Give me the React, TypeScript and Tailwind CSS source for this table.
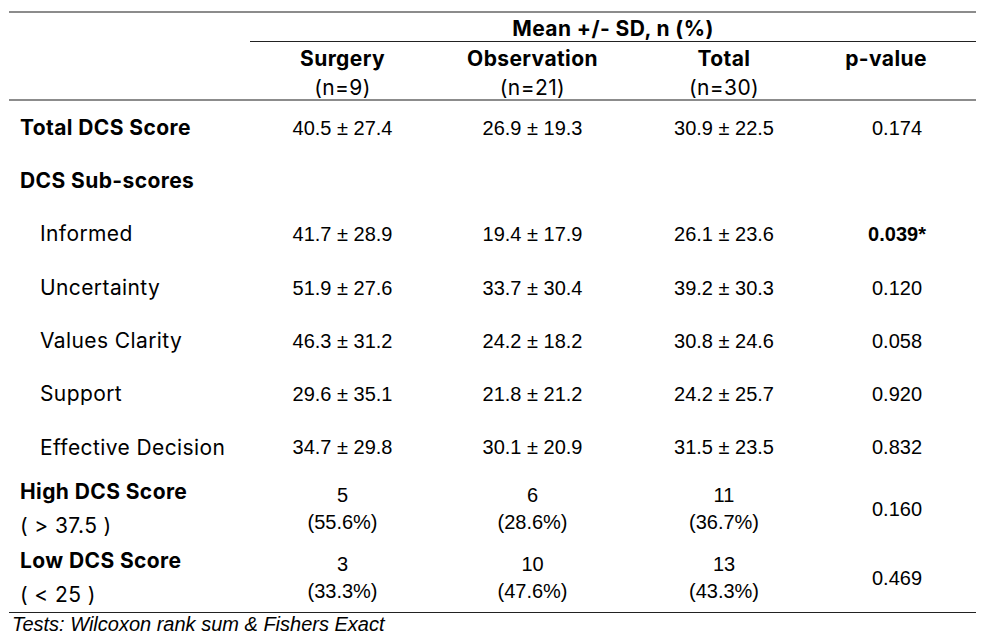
import React from "react";

const label = "font-['Inter',sans-serif] text-[21px] tracking-[0.4px] text-black";
const num = "font-['Liberation_Sans',Arial,sans-serif] text-[20px] text-black";
const grid = "grid grid-cols-[241px_185px_195px_188px_158px]";

type Row = { name: string; indent?: boolean; bold?: boolean; v?: string[]; p?: string; pBold?: boolean };

const rows: Row[] = [
  { name: "Total DCS Score", bold: true, v: ["40.5 ± 27.4", "26.9 ± 19.3", "30.9 ± 22.5"], p: "0.174" },
  { name: "DCS Sub-scores", bold: true },
  { name: "Informed", indent: true, v: ["41.7 ± 28.9", "19.4 ± 17.9", "26.1 ± 23.6"], p: "0.039*", pBold: true },
  { name: "Uncertainty", indent: true, v: ["51.9 ± 27.6", "33.7 ± 30.4", "39.2 ± 30.3"], p: "0.120" },
  { name: "Values Clarity", indent: true, v: ["46.3 ± 31.2", "24.2 ± 18.2", "30.8 ± 24.6"], p: "0.058" },
  { name: "Support", indent: true, v: ["29.6 ± 35.1", "21.8 ± 21.2", "24.2 ± 25.7"], p: "0.920" },
  { name: "Effective Decision", indent: true, v: ["34.7 ± 29.8", "30.1 ± 20.9", "31.5 ± 23.5"], p: "0.832" },
];

const cats = [
  { name: "High DCS Score", sub: "( > 37.5 )", v: [["5", "(55.6%)"], ["6", "(28.6%)"], ["11", "(36.7%)"]], p: "0.160" },
  { name: "Low DCS Score", sub: "( < 25 )", v: [["3", "(33.3%)"], ["10", "(47.6%)"], ["13", "(43.3%)"]], p: "0.469" },
];

export default function App() {
  return (
    <div className="w-[996px] h-[643px] bg-white overflow-hidden">
      <div className="ml-[9px] mt-[11px] w-[967px]">
        <div className="border-t-2 border-[#8c8c8c]" />
        {/* header row 1 */}
        <div className={grid}>
          <div />
          <div className="col-span-4 h-[29px] flex items-center justify-center border-b border-[#222]">
            <span className={`${label} font-bold leading-none mt-[2px]`}>Mean +/- SD, n (%)</span>
          </div>
        </div>
        {/* header row 2 */}
        <div className={`${grid} border-b-2 border-[#8c8c8c] h-[59px]`}>
          <div />
          {[
            ["Surgery", "(n=9)"],
            ["Observation", "(n=21)"],
            ["Total", "(n=30)"],
          ].map(([a, b]) => (
            <div key={a} className="flex flex-col items-center pt-[2px]">
              <span className={`${label} font-bold leading-[29px]`}>{a}</span>
              <span className={`${label} leading-[29px]`}>{b}</span>
            </div>
          ))}
          <div className="flex flex-col items-center pt-[2px] pr-[22px]">
            <span className={`${label} font-bold leading-[29px]`}>p-value</span>
          </div>
        </div>
        {/* body */}
        {rows.map((r) => (
          <div key={r.name} className={`${grid} h-[53.3px] items-center`}>
            <div className={`${label} ${r.bold ? "font-bold pl-[11px]" : "pl-[31px]"}`}>{r.name}</div>
            {(r.v ?? ["", "", ""]).map((x, i) => (
              <div key={i} className={`${num} text-center`}>{x}</div>
            ))}
            <div className={`${num} text-center ${r.pBold ? "font-bold" : ""}`}>{r.p ?? ""}</div>
          </div>
        ))}
        {cats.map((c) => (
          <div key={c.name} className={`${grid} h-[69px] items-center`}>
            <div className="flex flex-col pl-[11px]">
              <span className={`${label} font-bold leading-[34px]`}>{c.name}</span>
              <span className={`${label} leading-[34px]`}>{c.sub}</span>
            </div>
            {c.v.map(([a, b], i) => (
              <div key={i} className={`${num} text-center flex flex-col leading-[27px]`}>
                <span>{a}</span>
                <span>{b}</span>
              </div>
            ))}
            <div className={`${num} text-center`}>{c.p}</div>
          </div>
        ))}
        <div className="border-t border-[#222]" />
        <div className={`${num} italic text-[18px] leading-[22px] pl-[3px]`}>Tests: Wilcoxon rank sum &amp; Fishers Exact</div>
      </div>
    </div>
  );
}
